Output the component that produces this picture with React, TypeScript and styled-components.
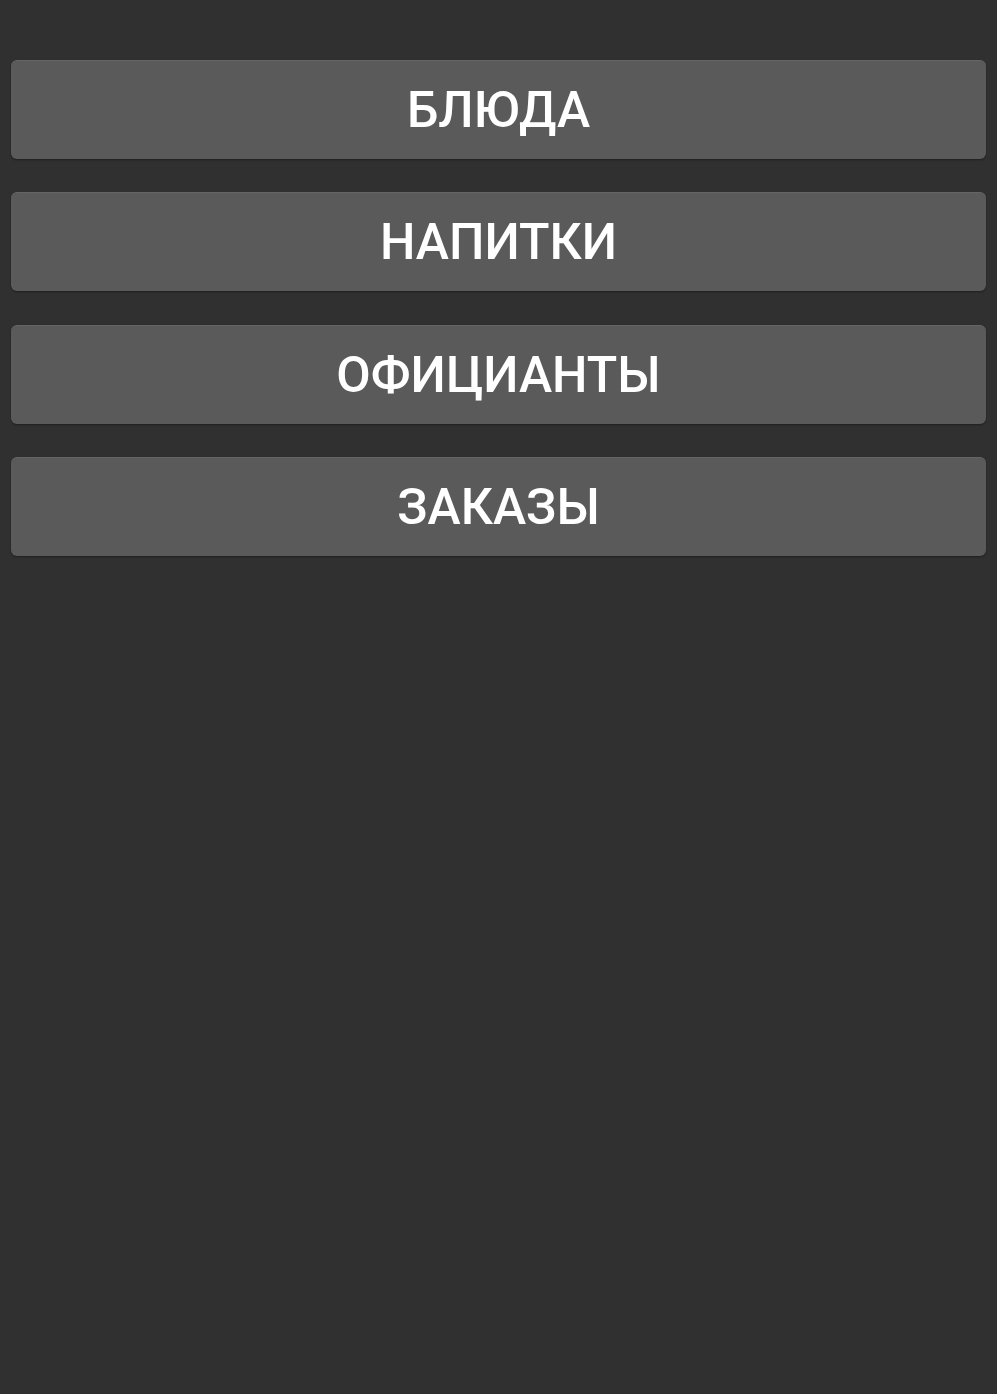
import React from "react";
import styled, { createGlobalStyle } from "styled-components";

const GlobalStyle = createGlobalStyle`
	html, body {
		margin: 0;
		padding: 0;
		background: #303030;
	}
	body {
		font-family: Roboto, "Liberation Sans", sans-serif;
	}
`;

const items = ["БЛЮДА", "НАПИТКИ", "ОФИЦИАНТЫ", "ЗАКАЗЫ"];

const App = () => {
	return (
		<>
			<GlobalStyle />
			<Page>
				<Menu>
					{items.map((item) => (
						<MenuButton key={item}>{item}</MenuButton>
					))}
				</Menu>
			</Page>
		</>
	);
};

export default App;

const Page = styled.div`
	min-height: 1394px;
	background: #303030;
	padding: 60px 11px 0;
	box-sizing: border-box;
`;

const Menu = styled.div`
	display: flex;
	flex-direction: column;
	gap: 33.4px;
`;

const MenuButton = styled.button`
	display: flex;
	align-items: center;
	justify-content: center;
	height: 99px;
	width: 100%;
	padding: 0;
	border: none;
	border-top: 1px solid #656565;
	border-radius: 6px;
	background: #5a5a5a;
	box-shadow: 0 1px 2px rgba(0, 0, 0, 0.35);
	color: #ffffff;
	font-family: Roboto, "Liberation Sans", sans-serif;
	font-size: 50px;
	font-weight: 500;
	letter-spacing: 0;
	cursor: pointer;
`;
